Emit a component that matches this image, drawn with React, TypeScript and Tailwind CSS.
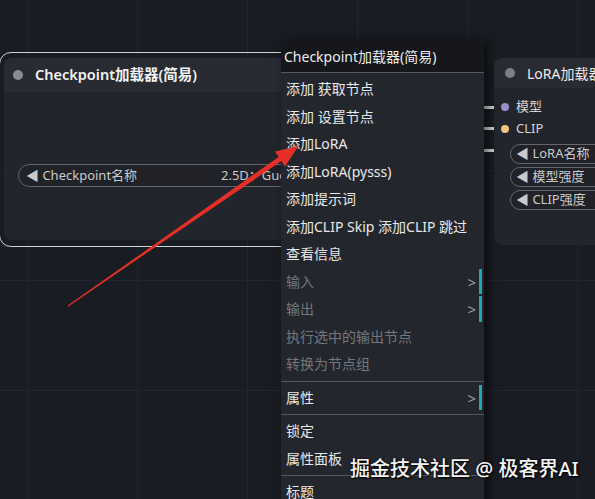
interface MenuItem {
  label: string;
  disabled?: boolean;
  submenu?: boolean;
  sepBefore?: boolean;
}

const menuItems: MenuItem[] = [
  { label: '添加 获取节点' },
  { label: '添加 设置节点' },
  { label: '添加LoRA' },
  { label: '添加LoRA(pysss)' },
  { label: '添加提示词' },
  { label: '添加CLIP Skip 添加CLIP 跳过' },
  { label: '查看信息' },
  { label: '输入', disabled: true, submenu: true },
  { label: '输出', disabled: true, submenu: true },
  { label: '执行选中的输出节点', disabled: true },
  { label: '转换为节点组', disabled: true },
  { label: '属性', submenu: true, sepBefore: true },
  { label: '锁定', sepBefore: true },
  { label: '属性面板' },
  { label: '标题', sepBefore: true },
];

function Separator() {
  return <div className="mt-[3px] mb-[2px] h-px bg-[#55575d]" />;
}

function ContextMenu() {
  return (
    <div className="absolute left-[281px] top-[40px] w-[203px] h-[470px] bg-[#24262d] shadow-[4px_2px_10px_rgba(0,0,0,0.6)]">
      <div className="h-[32px] bg-[#16171b] pl-[3px] flex items-center text-[14px] text-[#ececec]">
        Checkpoint加载器(简易)
      </div>
      <div className="h-px bg-[#55575d]" />
      <div className="pt-[2px]">
        {menuItems.map((item) => (
          <div key={item.label}>
            {item.sepBefore && <Separator />}
            <div
              className={
                'relative h-[27.5px] pl-[5px] flex items-center text-[14px] whitespace-nowrap ' +
                (item.disabled ? 'text-[#74767c]' : 'text-[#e8e8e8]')
              }
            >
              {item.label}
              {item.submenu && (
                <>
                  <span className="absolute right-[8px] top-[3px] text-[15px] text-[#a0a2a6]">&gt;</span>
                  <span className="absolute right-[2px] top-[1px] bottom-[1px] w-[3px] bg-[#22a8ab]" />
                </>
              )}
            </div>
          </div>
        ))}
      </div>
    </div>
  );
}

function LeftNode() {
  return (
    <>
      <div className="absolute left-[-1px] top-[52px] w-[330px] h-[195px] rounded-[12px] border border-[#d2d3d5]" />
      <div className="absolute left-[4px] top-[58px] w-[320px] h-[182px] rounded-[8px] bg-[#23252c] overflow-hidden">
        <div className="h-[34px] bg-[#292b33] flex items-center">
          <span className="ml-[9px] w-[10px] h-[10px] rounded-full bg-[#8a8c92]" />
          <span className="ml-[12px] text-[14.5px] font-semibold text-[#f2f2f2]">Checkpoint加载器(简易)</span>
        </div>
        <div className="mt-[72px] ml-[14px] w-[300px] h-[23px] rounded-full border border-[#64666c] bg-[#202228] flex items-center text-[13px] text-[#c9cacd] overflow-hidden">
          <span className="w-[202px] shrink-0 pl-[7px] whitespace-nowrap">◀ Checkpoint名称</span>
          <span className="shrink-0 whitespace-nowrap">2.5D：GuoFeng3.3</span>
        </div>
      </div>
    </>
  );
}

function Pill({ label }: { label: string }) {
  return (
    <div className="ml-[16px] w-[130px] h-[20px] rounded-full border border-[#64666c] bg-[#202228] flex items-center pl-[5px] text-[13px] text-[#c9cacd] whitespace-nowrap">
      ◀ {label}
    </div>
  );
}

function RightNode() {
  return (
    <>
      <div className="absolute left-[484px] top-[106px] w-[12px] h-[3px] bg-[#d6d6d6]" />
      <div className="absolute left-[484px] top-[127px] w-[12px] h-[3px] bg-[#d6d6d6]" />
      <div className="absolute left-[484px] top-[149px] w-[12px] h-[3px] bg-[#d6d6d6]" />
      <div className="absolute left-[494px] top-[58px] w-[140px] h-[187px] rounded-[8px] bg-[#23252c] overflow-hidden">
        <div className="h-[30px] bg-[#292b33] flex items-center whitespace-nowrap">
          <span className="ml-[11px] w-[10px] h-[10px] rounded-full bg-[#7d8087]" />
          <span className="ml-[12px] text-[14px] text-[#ececec]">LoRA加载器</span>
        </div>
        <div className="mt-[8px] h-[22px] flex items-center text-[13px] text-[#d4d4d6]">
          <span className="ml-[7px] w-[8px] h-[8px] rounded-full bg-[#9a8fc6]" />
          <span className="ml-[7px]">模型</span>
        </div>
        <div className="h-[22px] flex items-center text-[13px] text-[#d4d4d6]">
          <span className="ml-[7px] w-[8px] h-[8px] rounded-full bg-[#f3c57a]" />
          <span className="ml-[7px]">CLIP</span>
        </div>
        <div className="mt-[4px] flex flex-col gap-[3px]">
          <Pill label="LoRA名称" />
          <Pill label="模型强度" />
          <Pill label="CLIP强度" />
        </div>
      </div>
    </>
  );
}

export default function App() {
  return (
    <div className="relative w-[595px] h-[499px] overflow-hidden bg-[#191c23] font-['Noto_Sans','Noto_Sans_CJK_SC',sans-serif] bg-[linear-gradient(to_right,#22252d_1px,transparent_1px),linear-gradient(to_bottom,#22252d_1px,transparent_1px)] bg-[size:110px_110px] bg-[position:27px_60px]">
      <LeftNode />
      <RightNode />
      <ContextMenu />

      {/* red annotation arrow */}
      <svg className="absolute left-0 top-0" width="595" height="499" viewBox="0 0 595 499">
        <polygon
          points="68.3,306.4 281.4,161.1 285,166.6 298.5,146 275,151.4 278.6,156.9 67.7,305.6"
          fill="#e5302a"
        />
      </svg>

      <div className="absolute left-[350px] top-[454px] text-[20px] font-medium text-[#f4f4f4] whitespace-nowrap [text-shadow:0_0_2px_#000,1px_1px_2px_#000]">
        掘金技术社区 @ 极客界AI
      </div>
    </div>
  );
}
